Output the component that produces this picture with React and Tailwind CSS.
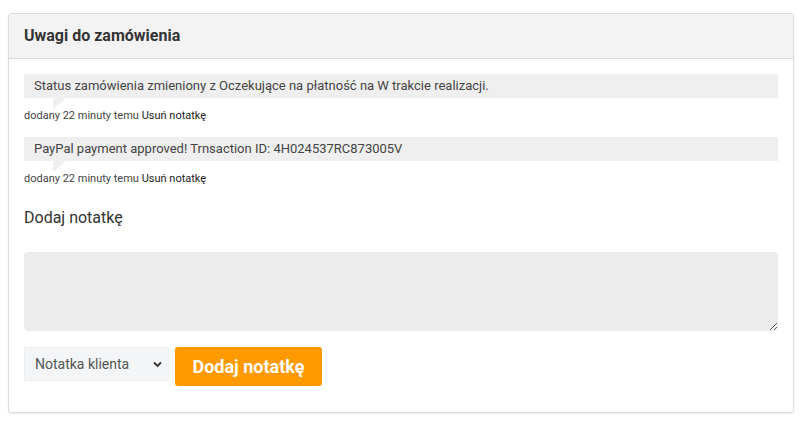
import React from "react";

const notes = [
  "Status zamówienia zmieniony z Oczekujące na płatność na W trakcie realizacji.",
  "PayPal payment approved! Trnsaction ID: 4H024537RC873005V",
];

function Note({ text }) {
  return (
    <li className="mb-[14px]">
      <div className="relative bg-[#efefef] h-6 flex items-center px-[10px] text-[13px] text-[#444]">
        <p>{text}</p>
        <span className="absolute left-[29px] top-full w-0 h-0 border-t-[11px] border-r-[13px] border-t-[#efefef] border-r-transparent" />
      </div>
      <p className="mt-[11px] text-[11px] leading-[14px] text-[#444]">
        dodany 22 minuty temu{" "}
        <a href="#" className="text-[#222]">Usuń notatkę</a>
      </p>
    </li>
  );
}

export default function App() {
  return (
    <div
      className="pt-[13px] px-[8px] bg-white min-h-[426px]"
      style={{ fontFamily: "Roboto, 'Liberation Sans', sans-serif" }}
    >
      <div className="w-[786px] border border-[#dcdcdc] rounded-[3px] shadow-[0_1px_2px_rgba(0,0,0,0.08)] bg-white">
        <div className="h-[45px] bg-[#f3f3f3] border-b border-[#dcdcdc] flex items-center px-[15px]">
          <h2 className="text-[16px] font-bold text-[#333]">Uwagi do zamówienia</h2>
        </div>
        <div className="px-[15px] pt-[15px] pb-[26px]">
          <ul>
            {notes.map((n) => (
              <Note key={n} text={n} />
            ))}
          </ul>
          <h3 className="mt-[20px] text-[16px] text-[#333]">Dodaj notatkę</h3>
          <textarea className="mt-[22px] block w-[754px] h-[79px] bg-[#ececec] rounded-[4px] outline-none" />
          <div className="mt-[16px] flex items-start gap-[6px]">
            <div className="relative w-[145px] h-[34px] bg-[#f3f5f6] border border-[#eceeef]">
              <select className="appearance-none w-full h-full bg-transparent pl-[10px] text-[14px] text-[#555] outline-none">
                <option>Notatka klienta</option>
              </select>
              <svg className="absolute right-[6px] top-[13px] w-[9px] h-[7px]" viewBox="0 0 9 7">
                <path d="M1 1.5 L4.5 5 L8 1.5" fill="none" stroke="#333" strokeWidth="1.8" />
              </svg>
            </div>
            <button className="w-[147px] h-[39px] bg-[#ff9900] rounded-[3px] text-white text-[18px] font-bold">
              Dodaj notatkę
            </button>
          </div>
        </div>
      </div>
    </div>
  );
}
